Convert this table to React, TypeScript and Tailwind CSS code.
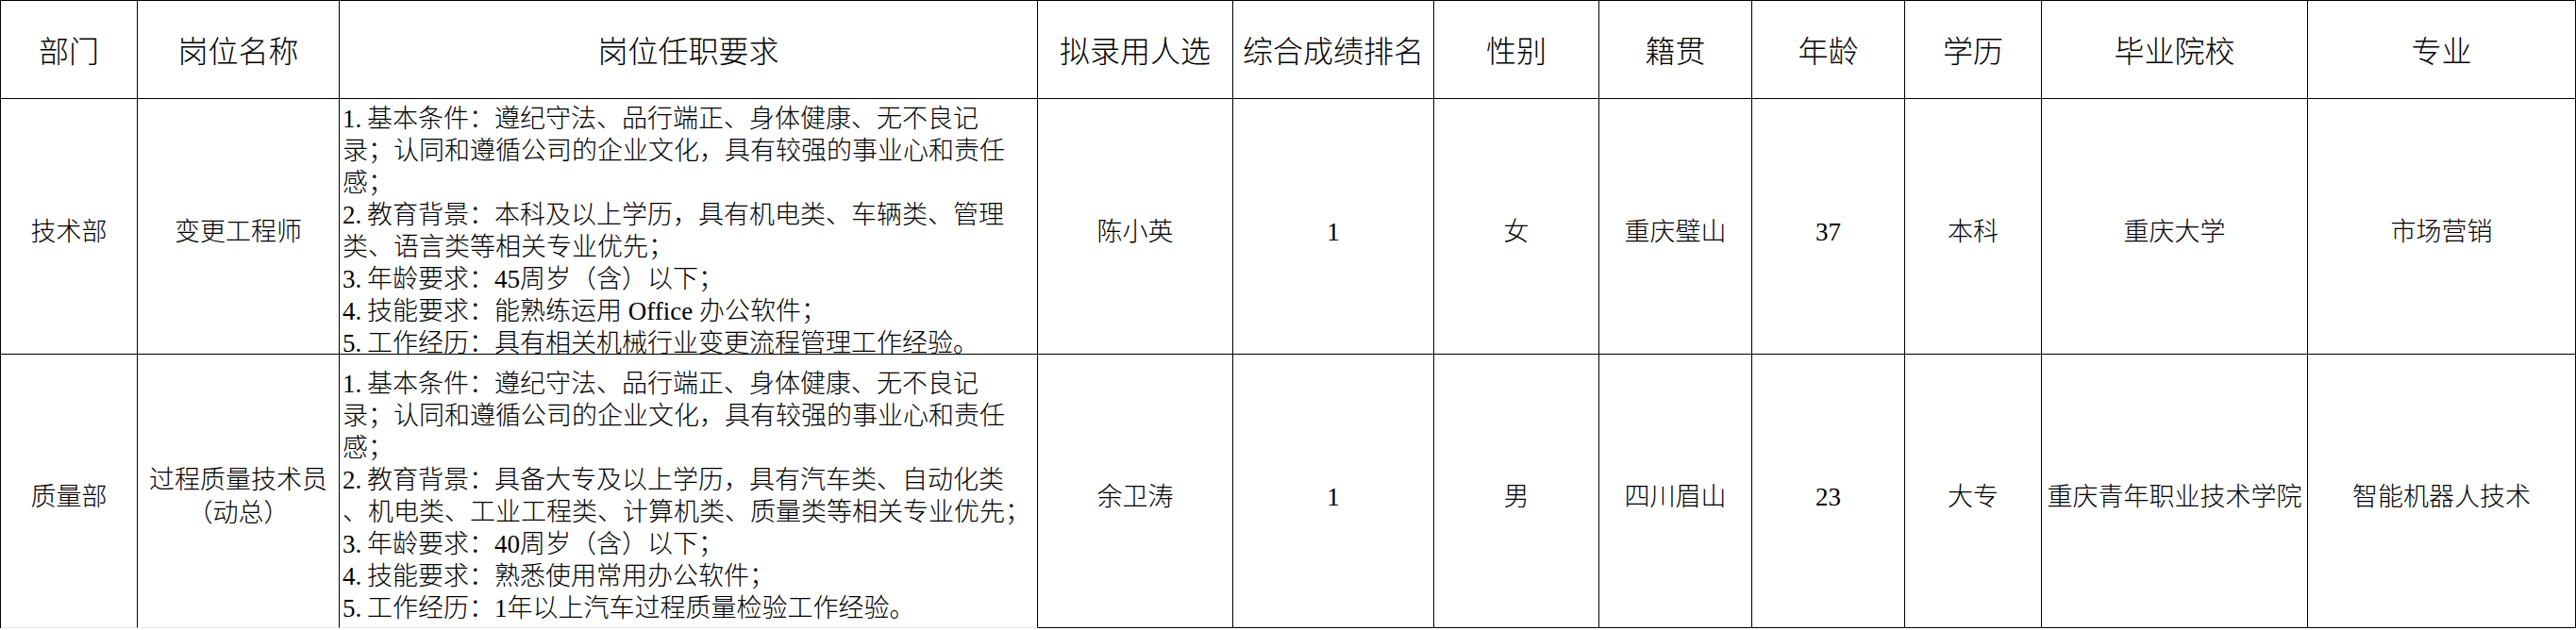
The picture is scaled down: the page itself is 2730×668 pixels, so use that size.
const headers = [
  '部门',
  '岗位名称',
  '岗位任职要求',
  '拟录用人选',
  '综合成绩排名',
  '性别',
  '籍贯',
  '年龄',
  '学历',
  '毕业院校',
  '专业',
]

const rows = [
  {
    dept: '技术部',
    title: ['变更工程师'],
    req: [
      '1.基本条件：遵纪守法、品行端正、身体健康、无不良记',
      '录；认同和遵循公司的企业文化，具有较强的事业心和责任',
      '感；',
      '2.教育背景：本科及以上学历，具有机电类、车辆类、管理',
      '类、语言类等相关专业优先；',
      '3.年龄要求：45周岁（含）以下；',
      '4.技能要求：能熟练运用 Office 办公软件；',
      '5.工作经历：具有相关机械行业变更流程管理工作经验。',
    ],
    cells: ['陈小英', '1', '女', '重庆璧山', '37', '本科', '重庆大学', '市场营销'],
  },
  {
    dept: '质量部',
    title: ['过程质量技术员', '（动总）'],
    req: [
      '1.基本条件：遵纪守法、品行端正、身体健康、无不良记',
      '录；认同和遵循公司的企业文化，具有较强的事业心和责任',
      '感；',
      '2.教育背景：具备大专及以上学历，具有汽车类、自动化类',
      '、机电类、工业工程类、计算机类、质量类等相关专业优先；',
      '3.年龄要求：40周岁（含）以下；',
      '4.技能要求：熟悉使用常用办公软件；',
      '5.工作经历：1年以上汽车过程质量检验工作经验。',
    ],
    cells: ['余卫涛', '1', '男', '四川眉山', '23', '大专', '重庆青年职业技术学院', '智能机器人技术'],
  },
]

// "1." in the source font is two half-width cells, so give it a fixed box
function ReqLine({ text }: { text: string }) {
  const m = text.match(/^(\d\.)(.*)$/)
  if (!m) return <div>{text}</div>
  return (
    <div>
      <span className="inline-block w-[26px]">{m[1]}</span>
      {m[2]}
    </div>
  )
}

export default function App() {
  return (
    <div className="bg-white w-[2730px] h-[668px] overflow-hidden text-black font-['Liberation_Serif','Noto_Sans_CJK_SC',serif] font-light">
      <div className="grid grid-cols-[145px_214px_740px_207px_213px_175px_162px_162px_145px_282px_284px] grid-rows-[104px_271px_290px] w-[2730px] border-l border-t border-black">
        {headers.map((h) => (
          <div
            key={h}
            className="flex items-center justify-center pt-[4px] border-r border-b border-black text-[32px] leading-[40px] whitespace-nowrap"
          >
            {h}
          </div>
        ))}

        {rows.map((r, i) => {
          const last = i === rows.length - 1
          const leftBorder = last ? 'border-b-[#e3e3e3]' : 'border-b-black'
          return (
            <div key={r.dept} className="contents">
              <div className={`flex items-center justify-center pt-[13px] border-r border-b border-r-black ${leftBorder} text-[27px] leading-[35px]`}>
                {r.dept}
              </div>
              <div className={`flex flex-col items-center justify-center pt-[13px] border-r border-b border-r-black ${leftBorder} text-[27px] leading-[35px] whitespace-nowrap`}>
                {r.title.map((t) => (
                  <div key={t}>{t}</div>
                ))}
              </div>
              <div className={`flex flex-col justify-center pl-[3px] pt-[10px] border-r border-b border-r-black ${leftBorder} text-[27px] leading-[34px] whitespace-nowrap`}>
                {r.req.map((line, k) => (
                  <ReqLine key={k} text={line} />
                ))}
              </div>
              {r.cells.map((c, k) => (
                <div
                  key={k}
                  className="flex items-center justify-center pt-[13px] border-r border-b border-black text-[27px] leading-[35px] whitespace-nowrap"
                >
                  {c}
                </div>
              ))}
            </div>
          )
        })}
      </div>
    </div>
  )
}
